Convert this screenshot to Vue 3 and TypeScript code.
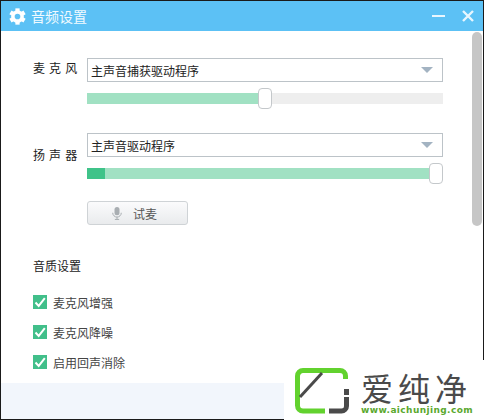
<script setup lang="ts">
/**
 * 音频设置窗口
 */
const devices = [
  { label: '麦 克 风', name: '主声音捕获驱动程序', thumb: 171, level: 0, labelShift: false },
  { label: '扬 声 器', name: '主声音驱动程序', thumb: 342, level: 18, labelShift: true }
]

const options = ['麦克风增强', '麦克风降噪', '启用回声消除']

const gearTeeth = [0, 60, 120, 180, 240, 300]
</script>

<template>
  <div class="window">
    <!-- 标题栏 -->
    <header class="titlebar">
      <svg class="gear" viewBox="0 0 24 24" width="17" height="17">
        <circle cx="12" cy="12" r="6.500" fill="none" stroke="#fff" stroke-width="5" />
        <rect
          v-for="a in gearTeeth"
          :key="a"
          x="9"
          y="0.500"
          width="6"
          height="5"
          fill="#fff"
          :transform="`rotate(${a} 12 12)`"
        />
      </svg>
      <span class="title">音频设置</span>
      <span class="spacer"></span>
      <svg class="win-btn" viewBox="0 0 13 12" width="13" height="12">
        <path d="M0 6h13" stroke="#e8f6fe" stroke-width="2" />
      </svg>
      <svg class="win-btn close" viewBox="0 0 12 12" width="12" height="12">
        <path d="M1 1l10 10M11 1L1 11" stroke="#e8f6fe" stroke-width="2.400" />
      </svg>
    </header>

    <div class="body">
      <main class="content">
        <!-- 设备 -->
        <section v-for="d in devices" :key="d.name" class="device">
          <div class="device-label" :class="{ shifted: d.labelShift }">{{ d.label }}</div>
          <div class="device-main">
            <div class="select">
              <span>{{ d.name }}</span>
              <i class="arrow"></i>
            </div>
            <div class="slider">
              <div class="slider-fill" :style="{ width: d.thumb + 7 + 'px' }"></div>
              <div v-if="d.level" class="slider-level" :style="{ width: d.level + 'px' }"></div>
              <div class="slider-thumb" :style="{ left: d.thumb + 'px' }"></div>
            </div>
          </div>
        </section>

        <button class="test-btn">
          <svg viewBox="0 0 14 18" width="10" height="13">
            <rect x="3.500" y="0" width="7" height="11.500" rx="3.500" fill="#a9aeb2" />
            <path d="M1 8a6 6 0 0 0 12 0" fill="none" stroke="#a9aeb2" stroke-width="1.400" />
            <path d="M7 14v3.500M4 17.300h6" stroke="#a9aeb2" stroke-width="1.400" />
          </svg>
          <span>试麦</span>
        </button>

        <!-- 音质设置 -->
        <h3 class="section-title">音质设置</h3>
        <ul class="options">
          <li v-for="o in options" :key="o">
            <svg class="check" viewBox="0 0 14 14" width="14" height="14">
              <rect width="14" height="14" fill="#41bf8a" />
              <path d="M2.500 7.500l3.200 3.400L11.800 3.200" fill="none" stroke="#fff" stroke-width="2" />
            </svg>
            <span>{{ o }}</span>
          </li>
        </ul>
      </main>
      <div class="scrollbar"><div class="scroll-thumb"></div></div>
    </div>

    <footer class="footer"></footer>

    <!-- 水印 -->
    <div class="watermark">
      <svg viewBox="0 0 54 46" width="54" height="46" class="wm-logo">
        <path d="M30 43H8a5.500 5.500 0 0 1-5.500-5.500V8A5.500 5.500 0 0 1 8 2.500h37A5.500 5.500 0 0 1 50.500 8v3" fill="none" stroke="#62d22e" stroke-width="5" />
        <path d="M27 5L5 29" stroke="#4a4a4a" stroke-width="3" />
        <path d="M51.500 21v6" stroke="#4a4a4a" stroke-width="5" />
        <path d="M34 43h12.500a5 5 0 0 0 5-5v-9" fill="none" stroke="#4a4a4a" stroke-width="5" />
      </svg>
      <div class="wm-text">
        <div class="wm-name">爱纯净</div>
        <div class="wm-url">www.aichunjing.com</div>
      </div>
    </div>
  </div>
</template>

<style>
html,
body {
  margin: 0;
  background: #fff;
}
</style>

<style scoped>
.window {
  position: relative;
  box-sizing: border-box;
  width: 484px;
  height: 420px;
  display: flex;
  flex-direction: column;
  background: #fff;
  border: 1px solid #1a1a1a;
  font-family: "Noto Sans CJK SC", "Liberation Sans", sans-serif;
  font-size: 12px;
  color: #333;
}

/* 标题栏 */
.titlebar {
  height: 30px;
  flex: none;
  display: flex;
  align-items: center;
  padding: 0 9px 0 8px;
  background: #5cc1f5;
}

.gear {
  margin-right: 5px;
}

.title {
  color: #f1faff;
  font-size: 14px;
}

.spacer {
  flex: 1;
}

.win-btn {
  display: block;
}

.close {
  margin-left: 17px;
}

.body {
  flex: 1;
  display: flex;
  min-height: 0;
}

.content {
  flex: 1;
  padding: 27px 0 0 32px;
}

/* 设备 */
.device {
  display: flex;
  height: 75px;
}

.device-label {
  width: 54px;
  line-height: 20px;
  font-size: 12px;
  word-spacing: 1.400px;
  color: #222;
}

.device-label.shifted {
  padding-top: 12px;
}

.device-main {
  width: 356px;
}

.select {
  box-sizing: border-box;
  height: 24px;
  display: flex;
  align-items: center;
  justify-content: space-between;
  padding: 0 9px 0 3px;
  border: 1px solid #bcc3c8;
  color: #222;
  font-size: 12px;
}

.arrow {
  width: 0;
  height: 0;
  border-left: 6px solid transparent;
  border-right: 6px solid transparent;
  border-top: 6px solid #a3b3c2;
}

.slider {
  position: relative;
  height: 11px;
  margin-top: 11px;
  background: #eeeeee;
}

.slider-fill {
  height: 100%;
  background: #a1e1c3;
}

.slider-level {
  position: absolute;
  left: 0;
  top: 0;
  height: 100%;
  background: #3fc389;
}

.slider-thumb {
  position: absolute;
  top: -5px;
  box-sizing: border-box;
  width: 14px;
  height: 21px;
  background: #fff;
  border: 1px solid #c4c8cb;
  border-radius: 4px;
}

/* 试麦按钮 */
.test-btn {
  box-sizing: border-box;
  display: flex;
  align-items: center;
  margin: -7px 0 0 54px;
  width: 101px;
  height: 24px;
  padding: 0 0 0 24px;
  gap: 11px;
  border: 1px solid #cfd3d6;
  border-radius: 3px;
  background: linear-gradient(#fbfbfc, #e9ebed);
  color: #555;
  font: inherit;
  font-size: 12px;
}

.section-title {
  margin: 32px 0 0;
  font-size: 12px;
  font-weight: 400;
  line-height: 18px;
  color: #222;
}

.options {
  list-style: none;
  margin: 20px 0 0;
  padding: 0;
}

.options li {
  display: flex;
  align-items: center;
  height: 14px;
  margin-bottom: 16px;
  gap: 6px;
  font-size: 12px;
  color: #444;
}

.check {
  flex: none;
}

/* 滚动条 */
.scrollbar {
  width: 11px;
  flex: none;
  padding-top: 1px;
}

.scroll-thumb {
  width: 10px;
  height: 194px;
  border-radius: 5px;
  background: #c6c6c6;
}

.footer {
  height: 36px;
  flex: none;
  background: #f2f6fc;
}

/* 水印盖住窗口右下角 */
.watermark {
  position: absolute;
  right: -1px;
  bottom: -1px;
  box-sizing: border-box;
  width: 200px;
  height: 60px;
  display: flex;
  padding: 8px 0 0 11px;
  background: #fff;
}

.wm-logo {
  flex: none;
}

.wm-text {
  margin-left: 12px;
}

.wm-name {
  margin-top: 3px;
  font-size: 32px;
  line-height: 33px;
  letter-spacing: 5px;
  color: #4a4a4a;
  white-space: nowrap;
}

.wm-url {
  margin-top: 1px;
  font-family: "DejaVu Sans", sans-serif;
  font-size: 9px;
  font-weight: 700;
  line-height: 10px;
  letter-spacing: 0.400px;
  color: #5aa82e;
  white-space: nowrap;
}
</style>
